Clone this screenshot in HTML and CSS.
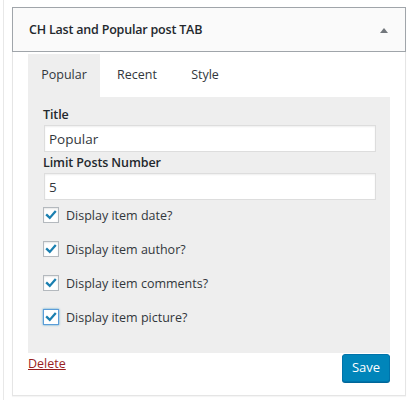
FILE: index.html
```html
<!DOCTYPE html>
<html>
<head>
<meta charset="utf-8">
<link rel="stylesheet" href="styles.css">
</head>
<body>
<div class="page">
  <div class="widget">
    <div class="widget-top">
      <h3 class="widget-title">CH Last and Popular post TAB</h3>
      <span class="toggle-arrow"></span>
    </div>
    <div class="widget-inside">
      <div class="tabs">
        <div class="tab tab-active tab-popular">Popular</div>
        <div class="tab tab-recent">Recent</div>
        <div class="tab tab-style">Style</div>
      </div>
      <div class="panel">
        <label class="field-label">Title</label>
        <input class="field-input" type="text" value="Popular">
        <label class="field-label field-label-second">Limit Posts Number</label>
        <input class="field-input" type="text" value="5">
        <div class="check-row first-row">
          <span class="checkbox"><svg viewBox="0 0 16 16" width="16" height="16"><path d="M3.4 8.2 L6.6 11.3 L12.6 4.4" fill="none" stroke="#1a7fb0" stroke-width="2.6" stroke-linecap="square"/></svg></span>
          <span class="check-label">Display item date?</span>
        </div>
        <div class="check-row">
          <span class="checkbox"><svg viewBox="0 0 16 16" width="16" height="16"><path d="M3.4 8.2 L6.6 11.3 L12.6 4.4" fill="none" stroke="#1a7fb0" stroke-width="2.6" stroke-linecap="square"/></svg></span>
          <span class="check-label">Display item author?</span>
        </div>
        <div class="check-row">
          <span class="checkbox"><svg viewBox="0 0 16 16" width="16" height="16"><path d="M3.4 8.2 L6.6 11.3 L12.6 4.4" fill="none" stroke="#1a7fb0" stroke-width="2.6" stroke-linecap="square"/></svg></span>
          <span class="check-label">Display item comments?</span>
        </div>
        <div class="check-row">
          <span class="checkbox checkbox-focus"><svg viewBox="0 0 16 16" width="16" height="16"><path d="M3.4 8.2 L6.6 11.3 L12.6 4.4" fill="none" stroke="#1a7fb0" stroke-width="2.6" stroke-linecap="square"/></svg></span>
          <span class="check-label">Display item picture?</span>
        </div>
      </div>
      <div class="widget-footer">
        <a class="delete-link" href="#">Delete</a>
        <button class="save-button" type="button">Save</button>
      </div>
    </div>
  </div>
</div>
</body>
</html>
```

FILE: styles.css
```css
* { box-sizing: border-box; }
html, body { margin: 0; padding: 0; background: #fff; }
body {
  font-family: "Open Sans", "Noto Sans", sans-serif;
  font-size: 12.5px;
  color: #32373c;
}
.page {
  margin-left: 3px;
  border-left: 1px solid #e8e8e8;
  height: 400px;
  padding: 7px 0 0 8px;
}
.widget {
  width: 394px;
  border: 1px solid #e5e5e5;
  box-shadow: 0 1px 1px rgba(0,0,0,0.04);
  background: #fff;
}
.widget-top {
  margin: -1px -1px 0 -1px;
  height: 45px;
  border: 1px solid #a0a5aa;
  background: #fafafa;
  display: flex;
  align-items: center;
  justify-content: space-between;
  padding: 0 17px 0 16px;
}
.widget-title {
  margin: 0;
  font-size: 12.5px;
  font-weight: 600;
  color: #23282d;
  letter-spacing: -0.2px;
}
.toggle-arrow {
  width: 0;
  height: 0;
  border-left: 4px solid transparent;
  border-right: 4px solid transparent;
  border-bottom: 5px solid #72777c;
  margin-top: 1px;
}
.widget-inside {
  padding: 2px 15px 13px 15px;
}
.tabs {
  display: flex;
  height: 43px;
}
.tab {
  display: flex;
  align-items: center;
  justify-content: center;
  font-size: 12.5px;
  color: #32373c;
  padding-bottom: 2px;
}
.tab-popular { width: 72px; }
.tab-recent { width: 74px; }
.tab-style { width: 62px; }
.tab-active { background: #eeeeee; }
.panel {
  background: #eeeeee;
  padding: 9px 14px 28px 15px;
}
.field-label {
  display: block;
  font-weight: 600;
  line-height: 18px;
  color: #23282d;
  letter-spacing: -0.1px;
}
.field-label-second { margin-top: 2px; }
.field-input {
  display: block;
  width: 332px;
  height: 27px;
  margin: 1px 0 0 1px;
  padding: 0 4px;
  border: 1px solid #ddd;
  box-shadow: inset 0 1px 2px rgba(0,0,0,0.07);
  background: #fff;
  font-family: "Open Sans", "Noto Sans", sans-serif;
  font-size: 13.5px;
  color: #32373c;
  outline: none;
}
.check-row {
  display: flex;
  align-items: center;
  margin-top: 18px;
  height: 16px;
}
.first-row { margin-top: 7px; }
.checkbox {
  width: 16px;
  height: 16px;
  border: 1px solid #b4b9be;
  background: #fff;
  box-shadow: inset 0 1px 2px rgba(0,0,0,0.1);
  display: flex;
  align-items: center;
  justify-content: center;
  flex: none;
}
.checkbox svg { display: block; width: 14px; height: 14px; }
.checkbox-focus {
  border-color: #5b9dd9;
  box-shadow: 0 0 2px rgba(30,140,190,0.8);
}
.check-label {
  margin-left: 7px;
  font-size: 12.5px;
  color: #32373c;
}
.widget-footer {
  display: flex;
  justify-content: space-between;
  align-items: flex-start;
  padding-top: 1px;
}
.delete-link {
  color: #9a1f1f;
  text-decoration: underline;
  line-height: 18px;
  font-size: 12.5px;
  margin-top: 1px;
}
.save-button {
  width: 48px;
  height: 28px;
  background: #0085ba;
  border: 1px solid #0073aa;
  border-radius: 3px;
  box-shadow: 0 1px 0 #006799;
  color: #fff;
  font-family: "Open Sans", "Noto Sans", sans-serif;
  font-size: 13px;
  padding: 0 0 2px 0;
}
```
